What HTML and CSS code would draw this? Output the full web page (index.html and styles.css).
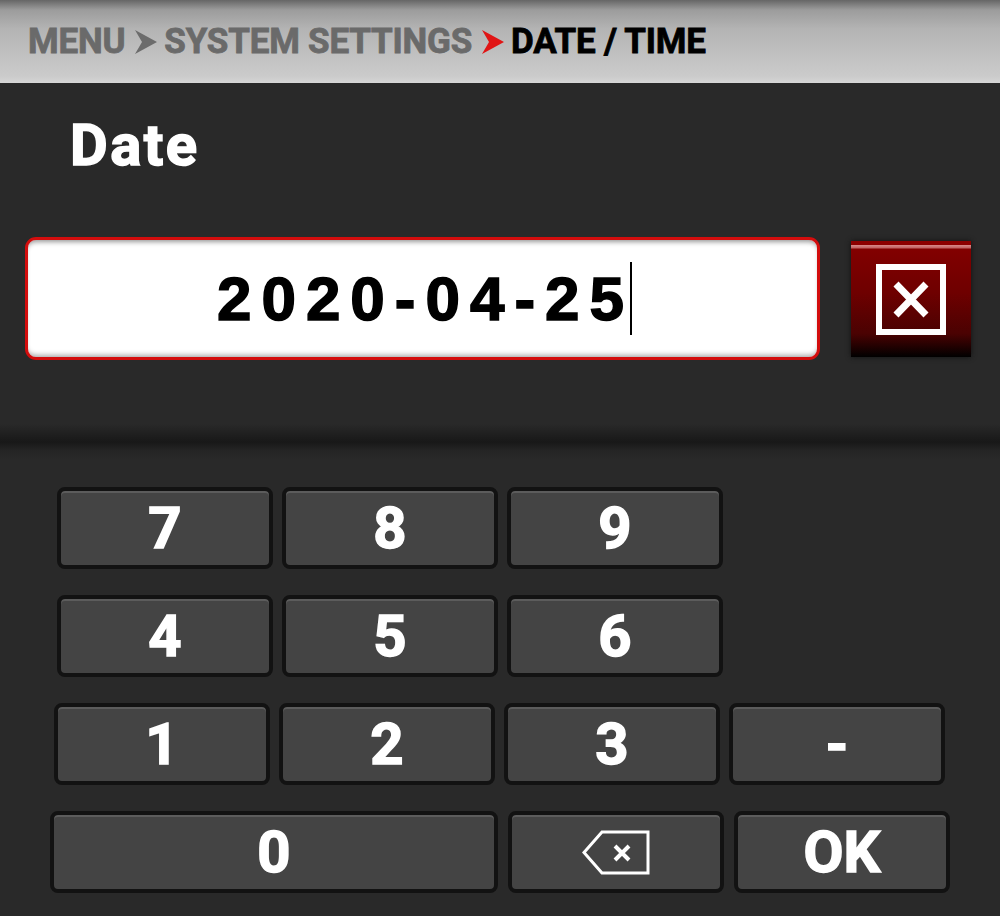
FILE: index.html
```html
<!DOCTYPE html>
<html lang="en">
<head>
    <meta charset="UTF-8">
    <meta name="viewport" content="width=device-width, initial-scale=1.0">
    <title>Date / Time</title>
    <link rel="stylesheet" href="styles.css">
</head>
<body>
    <div class="crumbs">
        <span class="crumb">MENU</span>
        <svg class="chevron" width="22" height="24" viewBox="0 0 22 24"><polygon points="0,0 22,12 0,24 7,12" fill="#6c6c6c"/></svg>
        <span class="crumb">SYSTEM SETTINGS</span>
        <svg class="chevron" width="22" height="24" viewBox="0 0 22 24"><polygon points="0,0 22,12 0,24 7,12" fill="#e01515"/></svg>
        <span class="crumb current">DATE / TIME</span>
    </div>

    <h1 class="title">Date</h1>

    <div class="entry-row">
        <div class="date-input">
            <span class="value">2020-04-25</span><span class="caret"></span>
        </div>
        <button class="clear-btn" type="button">
            <svg width="70" height="71" viewBox="0 0 70 71">
                <rect x="3" y="3" width="64" height="65" fill="none" stroke="#fff" stroke-width="6"/>
                <path d="M20 20 L50 51 M50 20 L20 51" stroke="#fff" stroke-width="7"/>
            </svg>
        </button>
    </div>

    <div class="divider"></div>

    <div class="keypad">
        <div class="key-row row-top">
            <button class="key">7</button>
            <button class="key">8</button>
            <button class="key">9</button>
        </div>
        <div class="key-row row-top">
            <button class="key">4</button>
            <button class="key">5</button>
            <button class="key">6</button>
        </div>
        <div class="key-row row-mid">
            <button class="key">1</button>
            <button class="key">2</button>
            <button class="key">3</button>
            <button class="key">-</button>
        </div>
        <div class="key-row row-bottom">
            <button class="key wide">0</button>
            <button class="key">
                <svg width="68" height="45" viewBox="0 0 68 45">
                    <polygon points="66,2 66,43 20,43 2,22.5 20,2" fill="none" stroke="#fff" stroke-width="3"/>
                    <path d="M33 16 L47 30 M47 16 L33 30" stroke="#fff" stroke-width="4"/>
                </svg>
            </button>
            <button class="key">OK</button>
        </div>
    </div>
</body>
</html>
```

FILE: styles.css
```css
body {
    margin: 0;
    width: 1000px;
    height: 916px;
    overflow: hidden;
    background-color: #292929;
    font-family: 'Roboto', 'Liberation Sans', sans-serif;
}
.crumbs {
    height: 83px;
    display: flex;
    align-items: center;
    padding-left: 28px;
    box-sizing: border-box;
    background: linear-gradient(#666 0, #9c9c9c 12%, #b4b4b4 35%, #cbcbcb 92%, #d6d6d6 100%);
}
.crumb {
    font-size: 35px;
    font-weight: 700;
    color: #6a6a6a;
    letter-spacing: -0.2px;
    line-height: 1;
    -webkit-text-stroke: 0.8px #6a6a6a;
}
.crumb.current {
    color: #000;
    -webkit-text-stroke-color: #000;
}
.chevron {
    margin: 0 7px 0 10px;
    display: block;
}
.title {
    margin: 33px 0 0 70px;
    font-size: 58px;
    line-height: 1;
    font-weight: 700;
    letter-spacing: 2.5px;
    color: #fff;
    -webkit-text-stroke: 1.5px #fff;
}
.entry-row {
    display: flex;
    align-items: center;
    margin-top: 63px;
    padding-left: 25px;
}
.date-input {
    width: 795px;
    height: 123px;
    box-sizing: border-box;
    border: 3px solid #d30d0d;
    border-radius: 11px;
    background: #fff;
    box-shadow: inset 0 5px 5px -3px #999, inset 0 -5px 5px -3px #aaa;
    display: flex;
    align-items: center;
    justify-content: center;
    padding-left: 4px;
}
.value {
    font-family: 'Liberation Sans', Arial, sans-serif;
    font-weight: 700;
    font-size: 62px;
    letter-spacing: 10px;
    color: #000;
    line-height: 1;
    -webkit-text-stroke: 1.5px #000;
}
.caret {
    display: block;
    width: 2px;
    height: 73px;
    background: #000;
    margin-left: -4px;
}
.clear-btn {
    margin-left: 31px;
    width: 120px;
    height: 116px;
    border: none;
    padding: 0;
    display: flex;
    align-items: center;
    justify-content: center;
    background: linear-gradient(#8c0000 0, #8c0000 4px, #d88a8a 4px, #c06060 7px, #820000 8px, #6e0000 45%, #4a0202 80%, #000 100%);
    box-shadow: 0 0 5px #111;
}
.clear-btn svg {
    display: block;
    margin-top: 2px;
}
.divider {
    height: 36px;
    margin-top: 64px;
    background: linear-gradient(#292929, #181818 50%, #252525 75%, #292929);
}
.keypad {
    margin-top: 27px;
    display: flex;
    flex-direction: column;
    gap: 26px;
}
.key-row {
    display: flex;
    gap: 9px;
}
.row-top {
    padding-left: 57px;
}
.row-mid {
    padding-left: 54px;
}
.row-bottom {
    padding-left: 50px;
    gap: 10px;
}
.key {
    width: 216px;
    height: 82px;
    box-sizing: border-box;
    border: 4px solid #121212;
    border-radius: 8px;
    background: #444;
    box-shadow: inset 0 2px 0 #5c5c5c;
    color: #fff;
    font-family: 'Roboto', sans-serif;
    font-weight: 700;
    font-size: 58px;
    line-height: 1;
    padding: 0;
    display: flex;
    align-items: center;
    justify-content: center;
    -webkit-text-stroke: 1.5px #fff;
}
.key.wide {
    width: 448px;
}
.key svg {
    display: block;
}
```
